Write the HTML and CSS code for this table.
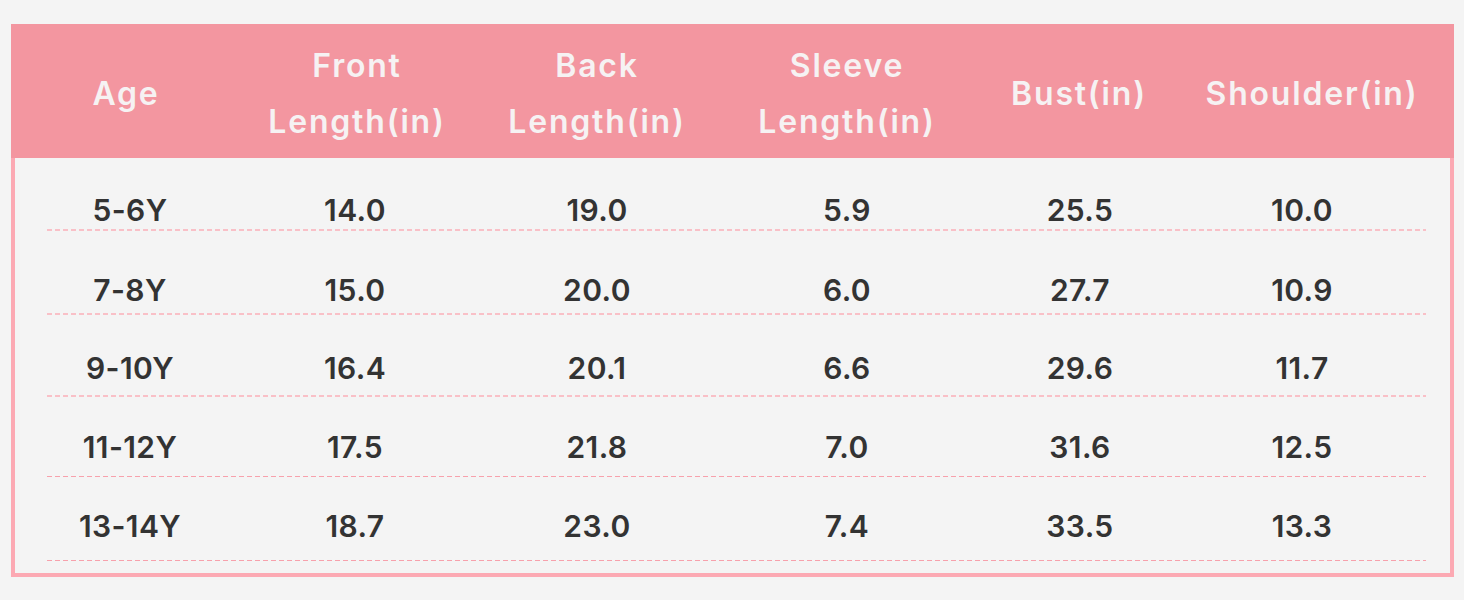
FILE: index.html
```html
<!DOCTYPE html>
<html>
<head>
<meta charset="utf-8">
<link rel="stylesheet" href="styles.css">
</head>
<body>
<div class="page">
  <div class="chart">
    <div class="head">
      <div class="hc">Age</div>
      <div class="hc">Front<br>Length(in)</div>
      <div class="hc">Back<br>Length(in)</div>
      <div class="hc">Sleeve<br>Length(in)</div>
      <div class="hc">Bust(in)</div>
      <div class="hc">Shoulder(in)</div>
    </div>
    <div class="body">
      <div class="row r1"><div class="c">5-6Y</div><div class="c">14.0</div><div class="c">19.0</div><div class="c">5.9</div><div class="c">25.5</div><div class="c last">10.0</div></div>
      <div class="row r2"><div class="c">7-8Y</div><div class="c">15.0</div><div class="c">20.0</div><div class="c">6.0</div><div class="c">27.7</div><div class="c last">10.9</div></div>
      <div class="row r3"><div class="c">9-10Y</div><div class="c">16.4</div><div class="c">20.1</div><div class="c">6.6</div><div class="c">29.6</div><div class="c last">11.7</div></div>
      <div class="row r4"><div class="c">11-12Y</div><div class="c">17.5</div><div class="c">21.8</div><div class="c">7.0</div><div class="c">31.6</div><div class="c last">12.5</div></div>
      <div class="row r5"><div class="c">13-14Y</div><div class="c">18.7</div><div class="c">23.0</div><div class="c">7.4</div><div class="c">33.5</div><div class="c last">13.3</div></div>
    </div>
  </div>
</div>
</body>
</html>
```

FILE: styles.css
```css
html, body {
  margin: 0;
  padding: 0;
  background: #f4f4f4;
}
.page {
  width: 1464px;
  height: 600px;
  box-sizing: border-box;
  padding: 24px 10px 0 11px;
  font-family: Inter, "Open Sans", sans-serif;
}
.chart {
  width: 1443px;
}
.head {
  height: 134px;
  background: #f396a0;
  display: grid;
  grid-template-columns: 230px 232px 248px 252px 212px 254px;
  align-items: center;
  box-sizing: border-box;
  padding-top: 6px;
}
.hc {
  text-align: center;
  color: #f6f2f3;
  font-size: 32px;
  font-weight: 600;
  letter-spacing: 1.8px;
  line-height: 56px;
  white-space: nowrap;
}
.body {
  border: 4px solid #fca9b3;
  border-top: none;
  height: 419px;
  box-sizing: border-box;
  padding: 0 24px 0 32px;
}
.row {
  display: grid;
  grid-template-columns: 166px 284px 200px 300px 166px 263px;
  align-content: end;
  box-sizing: border-box;
}
.row::after {
  content: "";
  grid-column: 1 / -1;
  height: 1px;
  background: repeating-linear-gradient(to right, #f7a1ac 0 5px, transparent 5px 8px);
}
.r1, .r2, .r3 {
  margin-bottom: -1px;
}
.r1::after, .r2::after, .r3::after {
  height: 2px;
  background: repeating-linear-gradient(to right, #f9c0c7 0 5px, transparent 5px 8px);
}
.r1 { height: 73px; }
.r1::after { margin-top: 4px; }
.r2 { height: 85px; }
.r2::after { margin-top: 8px; }
.r3 { height: 83px; }
.r3::after { margin-top: 12px; }
.r4 { height: 81px; }
.r4::after { margin-top: 14px; }
.r5 { height: 84px; }
.r5::after { margin-top: 19px; }
.c {
  text-align: center;
  color: #333333;
  font-size: 30px;
  font-weight: 600;
  letter-spacing: 0.4px;
  line-height: 30px;
  white-space: nowrap;
}
.c.last {
  padding-left: 15px;
}
```
